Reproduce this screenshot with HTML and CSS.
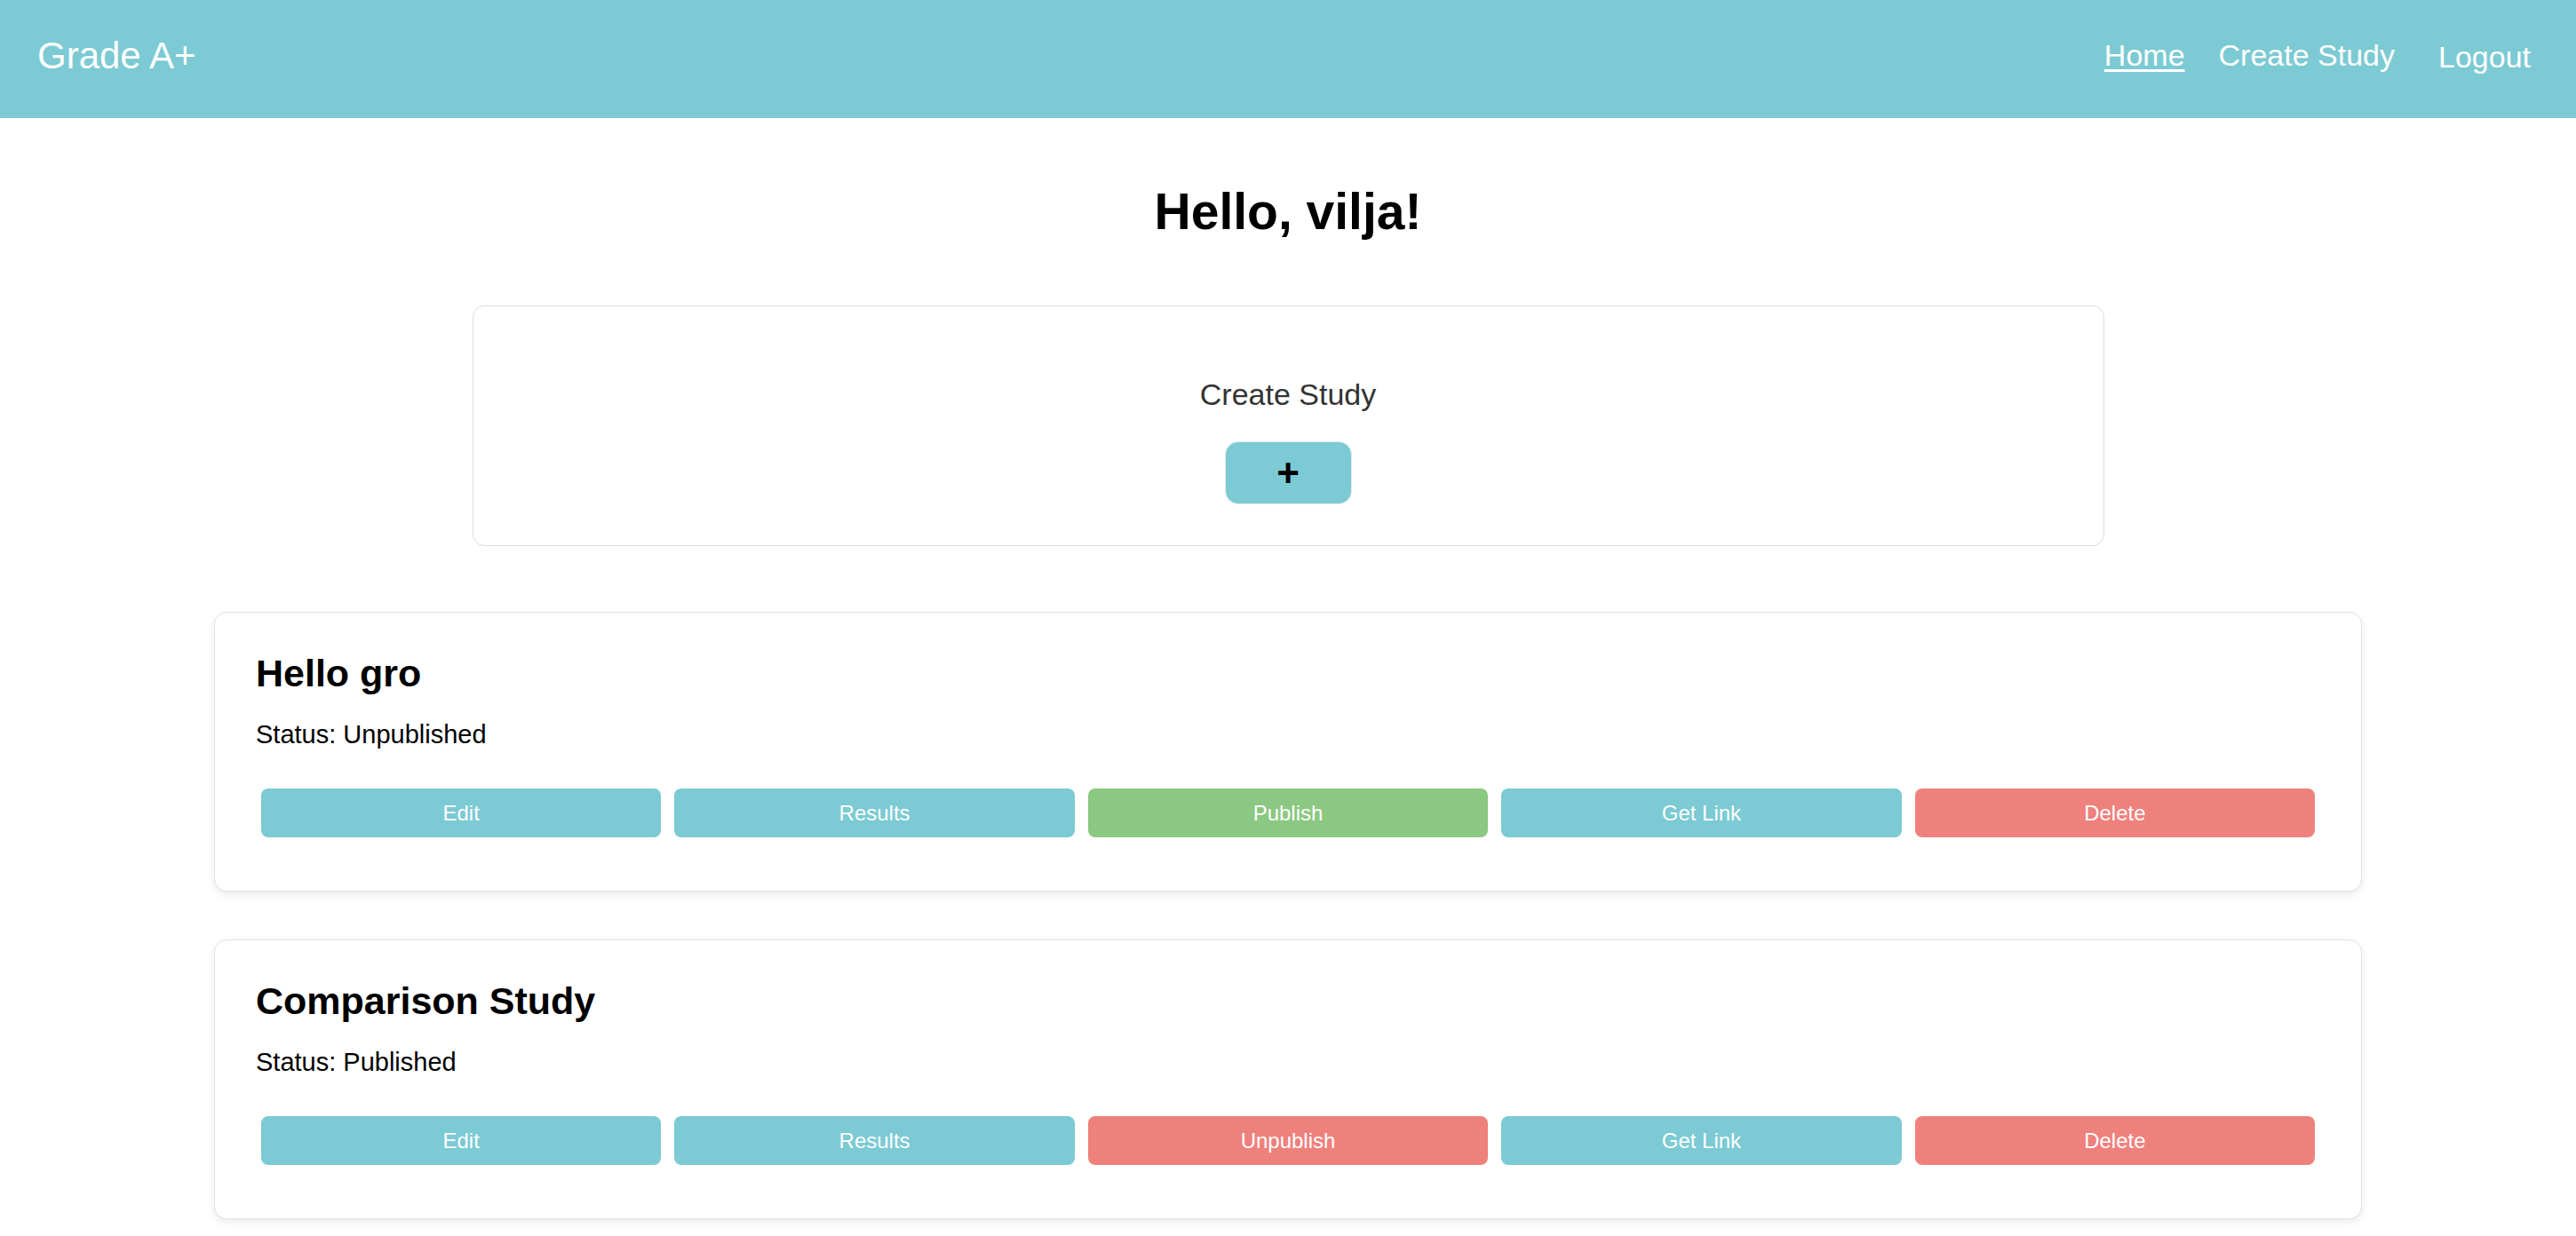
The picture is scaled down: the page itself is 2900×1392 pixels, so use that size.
FILE: index.html
```html
<!DOCTYPE html>
<html lang="en">
<head>
<meta charset="utf-8">
<title>Grade A+</title>
<link rel="stylesheet" href="styles.css">
</head>
<body>
<nav class="navbar">
  <div class="logo">Grade A+</div>
  <div class="nav-links">
    <a class="nav-link active" href="#">Home</a>
    <a class="nav-link" href="#">Create Study</a>
    <button class="nav-logout">Logout</button>
  </div>
</nav>
<main class="page">
  <h1 class="greeting">Hello, vilja!</h1>
  <section class="create-box">
    <p class="create-label">Create Study</p>
    <button class="create-btn">+</button>
  </section>
  <section class="study-card">
    <h2 class="study-title">Hello gro</h2>
    <p class="study-status">Status: Unpublished</p>
    <div class="study-actions">
      <button class="action teal">Edit</button>
      <button class="action teal">Results</button>
      <button class="action green">Publish</button>
      <button class="action teal">Get Link</button>
      <button class="action red">Delete</button>
    </div>
  </section>
  <section class="study-card">
    <h2 class="study-title">Comparison Study</h2>
    <p class="study-status">Status: Published</p>
    <div class="study-actions">
      <button class="action teal">Edit</button>
      <button class="action teal">Results</button>
      <button class="action red">Unpublish</button>
      <button class="action teal">Get Link</button>
      <button class="action red">Delete</button>
    </div>
  </section>
</main>
</body>
</html>
```

FILE: styles.css
```css
* { box-sizing: border-box; }

body {
  margin: 0;
  font-family: "Liberation Sans", Arial, Helvetica, sans-serif;
  background: #ffffff;
  color: #000;
}

.navbar {
  height: 133px;
  background: #7ccad3;
  display: flex;
  align-items: center;
  justify-content: space-between;
  padding: 0 51px 9px 42px;
}

.logo {
  color: #fff;
  font-size: 42px;
  line-height: 1;
  margin-top: 1px;
}

.nav-links {
  display: flex;
  align-items: center;
}

.nav-link {
  color: #fff;
  font-size: 34px;
  text-decoration: none;
  margin-left: 38px;
  line-height: 1;
}

.nav-link.active {
  text-decoration: underline;
  text-underline-offset: 4px;
  text-decoration-thickness: 3px;
}

.nav-logout {
  background: none;
  border: none;
  color: #fff;
  font-family: inherit;
  font-size: 34px;
  margin-left: 49px;
  padding: 0;
  line-height: 1;
  margin-top: 4px;
}

.page {
  display: flex;
  flex-direction: column;
  align-items: center;
  padding-bottom: 40px;
}

.greeting {
  margin: 72px 0 73px;
  font-size: 57px;
  line-height: 66px;
  font-weight: bold;
}

.create-box {
  width: 1837px;
  height: 271px;
  border: 1px solid #dedede;
  border-radius: 13px;
  display: flex;
  flex-direction: column;
  align-items: center;
  padding-top: 79px;
}

.create-label {
  margin: 0;
  font-size: 34px;
  line-height: 40px;
  color: #333;
}

.create-btn {
  margin-top: 33px;
  width: 143px;
  height: 71px;
  background: #7ccad3;
  border: 1px solid #e4eef0;
  border-radius: 15px;
  font-family: inherit;
  font-size: 44px;
  font-weight: bold;
  color: #000;
  line-height: 1;
  padding: 0;
}

.study-card {
  width: 2418px;
  margin-top: 74px;
  border: 1px solid #e2e2e2;
  border-radius: 14px;
  background: #fff;
  box-shadow: 0 4px 10px rgba(0, 0, 0, 0.08);
  padding: 44px 46px 60px;
}

.study-card + .study-card {
  margin-top: 54px;
}

.study-title {
  margin: 0;
  font-size: 43px;
  line-height: 49px;
  font-weight: bold;
}

.study-status {
  margin: 27px 0 0;
  font-size: 29px;
  line-height: 34px;
}

.study-actions {
  margin-top: 44px;
  display: flex;
  gap: 15px;
  padding: 0 6px;
}

.action {
  flex: 1;
  height: 55px;
  border: none;
  border-radius: 8px;
  color: #fff;
  font-family: inherit;
  font-size: 24px;
  padding: 0;
}

.teal { background: #7ccad3; }
.green { background: #8bc881; }
.red { background: #ef817d; }
```
